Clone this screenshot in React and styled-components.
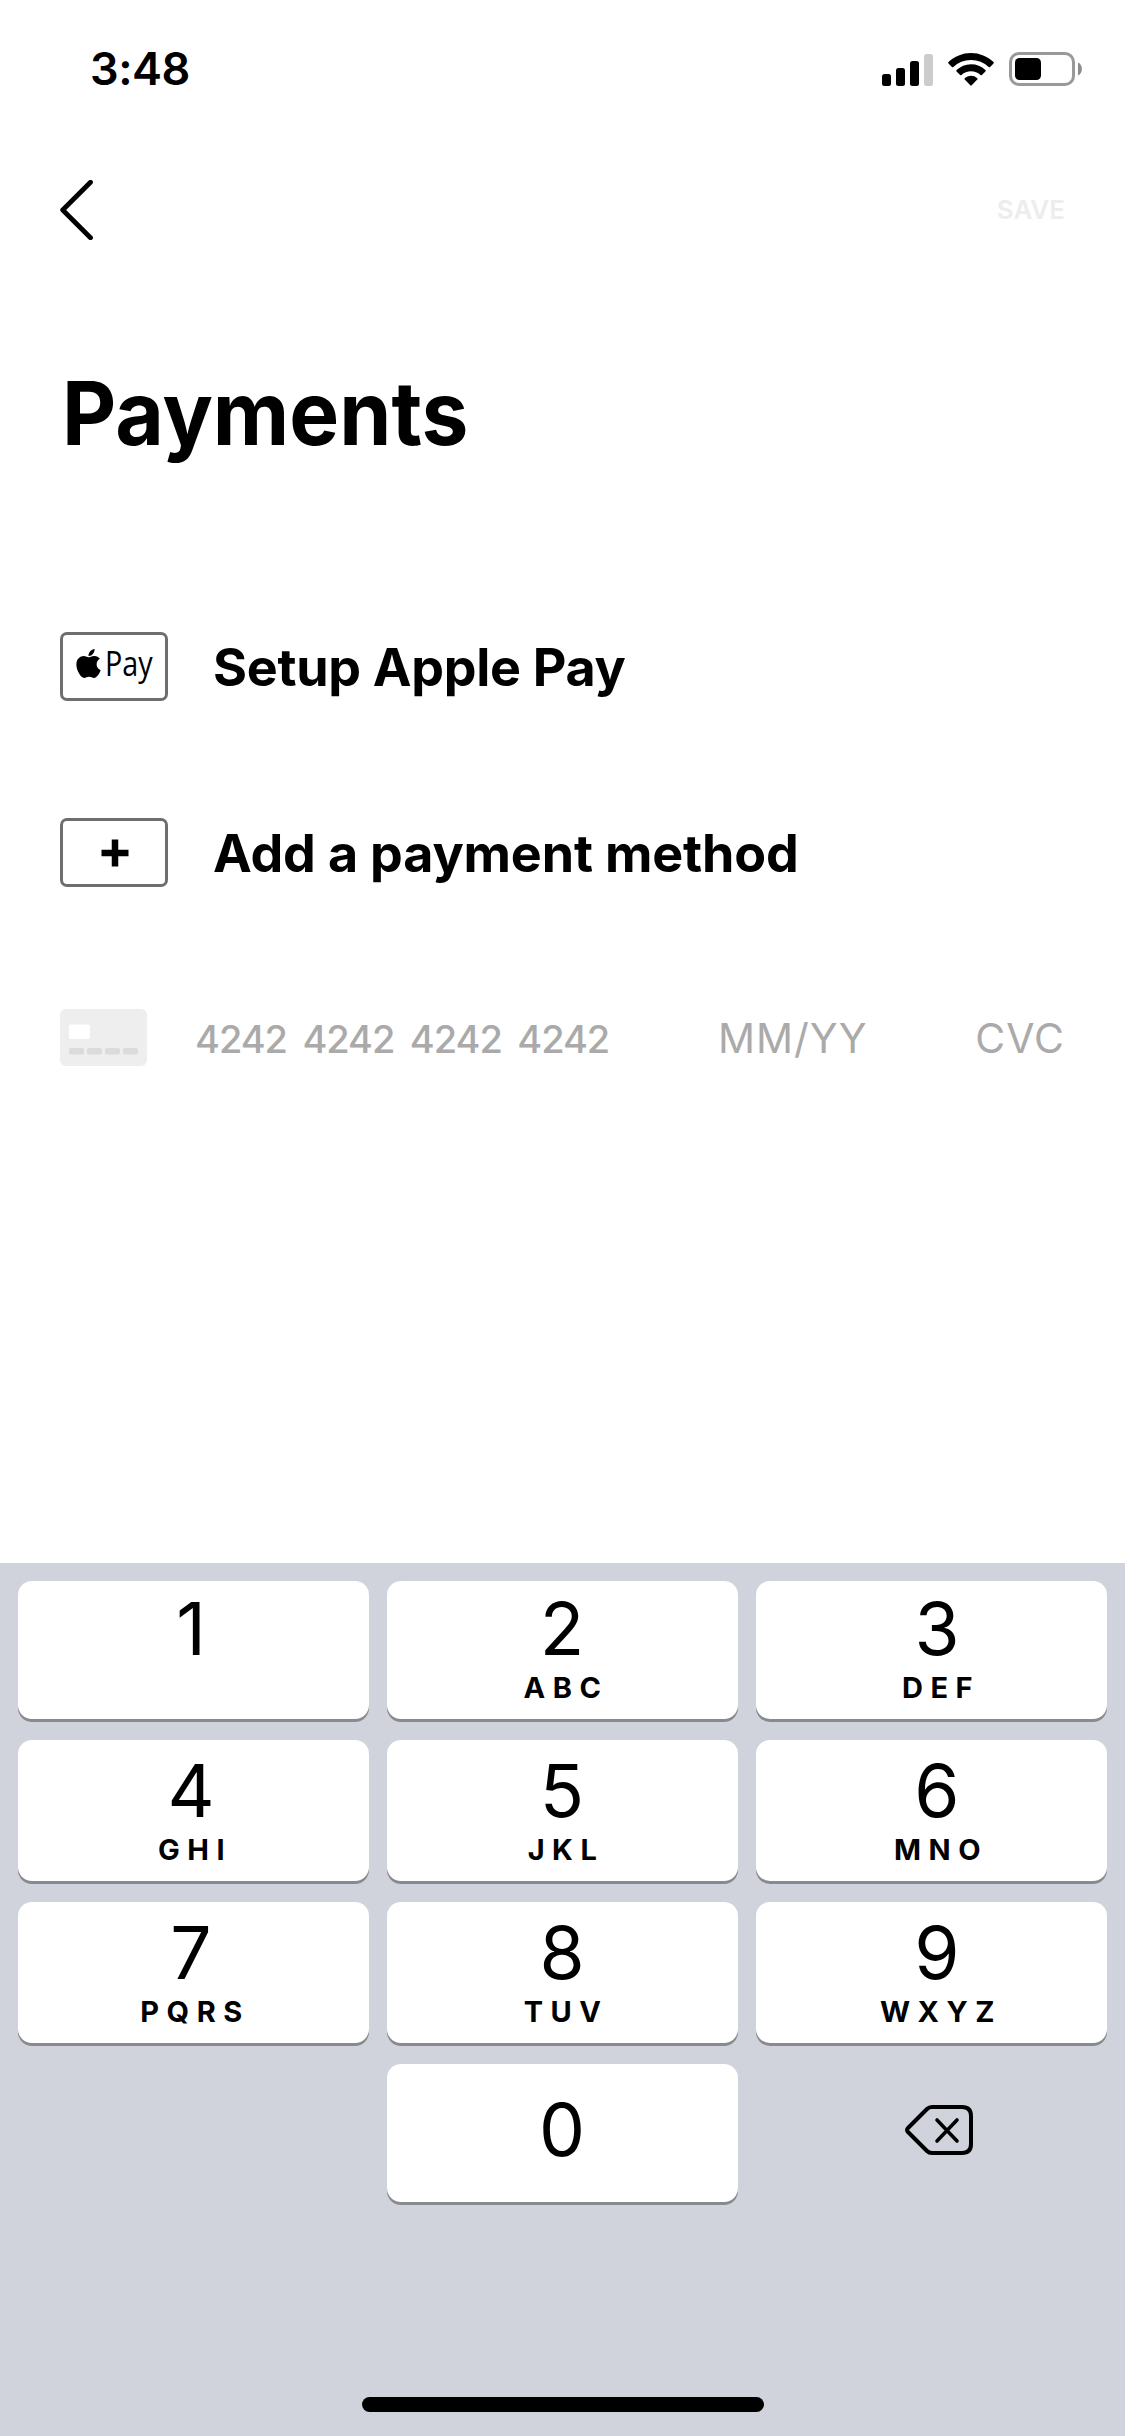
import React from "react";
import styled, { createGlobalStyle } from "styled-components";
import { FaApple } from "react-icons/fa";

const GlobalStyle = createGlobalStyle`
  * { box-sizing: border-box; }
  body { margin: 0; background: #fff; }
`;

const Screen = styled.main`
  display: flex;
  flex-direction: column;
  width: 1125px;
  height: 2436px;
  overflow: hidden;
  background: #fff;
  color: #000;
  font-family: Inter, "Liberation Sans", sans-serif;
`;

const StatusBar = styled.header`
  display: flex;
  align-items: center;
  justify-content: space-between;
  height: 138px;
  padding: 0 43px 0 90px;
`;

const Clock = styled.time`
  font-size: 45px;
  line-height: 50px;
  font-weight: 600;
  letter-spacing: -0.5px;
`;

const StatusIcons = styled.div`
  display: flex;
  align-items: center;
  gap: 15px;
`;

const NavBar = styled.nav`
  display: flex;
  align-items: center;
  justify-content: space-between;
  height: 144px;
  padding: 0 60px 0 60px;
`;

const NavButton = styled.button`
  display: flex;
  padding: 0;
  border: 0;
  background: none;
  color: ${({ $muted }) => ($muted ? "#ededed" : "#000")};
  font: 600 26px/30px Inter, "Liberation Sans", sans-serif;
  letter-spacing: 0;
`;

const Title = styled.h1`
  margin: 81px 0 0 62px;
  font-size: 88px;
  line-height: 100px;
  font-weight: 700;
  letter-spacing: 0;
  transform: scaleX(0.952);
  transform-origin: left center;
`;

const Methods = styled.ul`
  display: flex;
  flex-direction: column;
  gap: 117px;
  margin: 169px 0 0;
  padding: 0 60px;
  list-style: none;
`;

const Method = styled.li`
  display: flex;
  align-items: center;
  gap: 45px;
  height: 69px;
`;

const Badge = styled.span`
  display: flex;
  align-items: center;
  justify-content: center;
  width: 108px;
  height: 69px;
  border: 3px solid #6e6e6e;
  border-radius: 7px;
`;

const MethodName = styled.span`
  padding-top: 2px;
  font-size: 52px;
  line-height: 64px;
  font-weight: 700;
  letter-spacing: ${({ $tracking }) => $tracking};
  white-space: nowrap;
`;

const PayMark = styled.span`
  display: flex;
  align-items: center;
  gap: 0;
  height: 40px;
  margin: 0 -3px 7px 0;
`;

const PayWord = styled.span`
  width: 54px;
  font: 400 35px/40px "Open Sans", "Noto Sans", sans-serif;
  transform: scaleX(0.82);
  transform-origin: left center;
`;

const CardForm = styled.form`
  display: flex;
  align-items: center;
  height: 57px;
  margin-top: 122px;
  padding: 0 60px;
  color: #aaa;
  line-height: 50px;
`;

const CardNumber = styled.span`
  display: flex;
  gap: 15.5px;
  width: 523px;
  margin-left: 48px;
  padding-top: 2px;
  font-size: 38px;
  font-weight: 450;
  letter-spacing: -1.05px;
`;

const CardField = styled.span`
  font-size: 41px;
  letter-spacing: ${({ $tracking }) => $tracking};
  &:last-child { margin-left: auto; }
`;

const Keyboard = styled.section`
  display: flex;
  flex-direction: column;
  align-items: center;
  justify-content: space-between;
  height: 873px;
  margin-top: auto;
  padding: 18px 18px 24px;
  background: #d0d3db;
`;

const Keys = styled.div`
  display: grid;
  grid-template-columns: repeat(3, 351px);
  grid-template-rows: 138px 141px 141px 138px;
  gap: 21px 18px;
`;

const Key = styled.button`
  display: flex;
  flex-direction: column;
  align-items: center;
  justify-content: ${({ $single }) => ($single ? "center" : "flex-end")};
  padding: 0 0 ${({ $single }) => ($single ? "6px" : "16px")};
  border: 0;
  border-radius: 14px;
  background: ${({ $plain }) => ($plain ? "transparent" : "#fff")};
  box-shadow: ${({ $plain }) => ($plain ? "none" : "0 3px 0 #888a8d")};
  color: #000;
  font-family: Inter, "Liberation Sans", sans-serif;
`;

const KeyFace = styled.span`
  display: flex;
  flex-direction: column;
  align-items: center;
  margin-left: ${({ $shift }) => $shift}px;
`;

const Digit = styled.span`
  font-size: 73px;
  line-height: 80px;
  font-weight: 400;
`;

const Letters = styled.span`
  height: 31px;
  margin-top: 3px;
  padding-left: 8px;
  font-size: 29px;
  line-height: 31px;
  font-weight: 650;
  letter-spacing: 7.5px;
`;

const HomeIndicator = styled.div`
  width: 402px;
  height: 15px;
  border-radius: 8px;
  background: #000;
`;

const columnShift = [-5, -1, 11];

const keys = [
  ["1", ""], ["2", "ABC"], ["3", "DEF"],
  ["4", "GHI"], ["5", "JKL"], ["6", "MNO"],
  ["7", "PQRS"], ["8", "TUV"], ["9", "WXYZ"],
];

const SignalIcon = () => (
  <svg width="51" height="33" viewBox="0 0 51 33">
    <rect x="0" y="21" width="9" height="12" rx="2.5" />
    <rect x="14" y="15" width="9" height="18" rx="2.5" />
    <rect x="28" y="8" width="9" height="25" rx="2.5" />
    <rect x="42" y="1" width="9" height="32" rx="2.5" fill="#ccc" />
  </svg>
);

const WifiIcon = () => (
  <svg width="46" height="33" viewBox="0 0 46 33">
    <path d="M23 0C14.400 0 6.400 3.400.500 9.100a1 1 0 0 0 0 1.400l3.400 3.500a1 1 0 0 0 1.400 0A25.500 25.500 0 0 1 23 7a25.500 25.500 0 0 1 17.700 7 1 1 0 0 0 1.400 0l3.400-3.500a1 1 0 0 0 0-1.400C39.600 3.400 31.600 0 23 0Z" />
    <path d="M23 11.300c-5.600 0-10.600 2.200-14.400 5.800a1 1 0 0 0 0 1.400l3.500 3.500a1 1 0 0 0 1.400 0 14 14 0 0 1 19 0 1 1 0 0 0 1.400 0l3.500-3.500a1 1 0 0 0 0-1.400A20.800 20.800 0 0 0 23 11.300Z" />
    <path d="M23 22.800c-2.400 0-4.600.9-6.300 2.400a1 1 0 0 0 0 1.400l5.600 5.700a1 1 0 0 0 1.400 0l5.600-5.700a1 1 0 0 0 0-1.400 9.300 9.300 0 0 0-6.300-2.400Z" />
  </svg>
);

const BatteryIcon = () => (
  <svg width="73" height="34" viewBox="0 0 73 34">
    <rect x="1.500" y="1.500" width="63" height="31" rx="8.500" fill="none" stroke="#999" strokeWidth="3" />
    <rect x="6" y="6" width="26" height="22" rx="4.500" />
    <path d="M69 10.500c5.200 2.200 5.200 10.800 0 13Z" fill="#8c8c8c" />
  </svg>
);

const BackIcon = () => (
  <svg width="35" height="60" viewBox="0 0 35 60">
    <path d="M30.500 2.300 2.700 30l27.800 27.700" fill="none" stroke="#000" strokeWidth="4.800" strokeLinecap="round" strokeLinejoin="round" />
  </svg>
);

const PlusMark = styled.svg`
  margin-left: 1px;
`;

const PlusIcon = () => (
  <PlusMark width="28" height="28" viewBox="0 0 28 28">
    <path d="M14 0.500v27M0.500 14h27" fill="none" stroke="#000" strokeWidth="6.500" />
  </PlusMark>
);

const CardIcon = () => (
  <svg width="87" height="57" viewBox="0 0 87 57">
    <rect width="87" height="57" rx="6" fill="#eee" />
    <rect x="9" y="15.500" width="21" height="14.500" rx="2" fill="#fff" />
    {[9, 27, 45, 63].map((x) => (
      <rect key={x} x={x} y="39" width="15" height="6.500" rx="2" fill="#dbdbdb" />
    ))}
  </svg>
);

const DeleteIcon = () => (
  <svg width="70" height="52" viewBox="0 0 70 52" fill="none" stroke="#000" strokeLinecap="round" strokeLinejoin="round">
    <path d="M28 3h30q9 0 9 9v28q0 9-9 9H28q-3 0-5-2L4 28q-2-2 0-4L23 5q2-2 5-2Z" strokeWidth="4" />
    <path d="m33 16 20 21M53 16 33 37" strokeWidth="3.600" />
  </svg>
);

export default function App() {
  return (
    <Screen>
      <GlobalStyle />
      <StatusBar>
        <Clock>3:48</Clock>
        <StatusIcons>
          <SignalIcon />
          <WifiIcon />
          <BatteryIcon />
        </StatusIcons>
      </StatusBar>
      <NavBar>
        <NavButton aria-label="Back"><BackIcon /></NavButton>
        <NavButton $muted>SAVE</NavButton>
      </NavBar>
      <Title>Payments</Title>
      <Methods>
        <Method>
          <Badge>
            <PayMark>
              <FaApple size={33} />
              <PayWord>Pay</PayWord>
            </PayMark>
          </Badge>
          <MethodName $tracking="-0.3px">Setup Apple Pay</MethodName>
        </Method>
        <Method>
          <Badge><PlusIcon /></Badge>
          <MethodName $tracking="-0.15px">Add a payment method</MethodName>
        </Method>
      </Methods>
      <CardForm>
        <CardIcon />
        <CardNumber>
          <span>4242</span><span>4242</span><span>4242</span><span>4242</span>
        </CardNumber>
        <CardField $tracking="1px">MM/YY</CardField>
        <CardField $tracking="1px">CVC</CardField>
      </CardForm>
      <Keyboard>
        <Keys>
          {keys.map(([digit, letters], i) => (
            <Key key={digit}>
              <KeyFace $shift={columnShift[i % 3]}>
                <Digit>{digit}</Digit>
                <Letters>{letters}</Letters>
              </KeyFace>
            </Key>
          ))}
          <span />
          <Key $single>
            <KeyFace $shift={columnShift[1]}><Digit>0</Digit></KeyFace>
          </Key>
          <Key $plain $single aria-label="Delete">
            <KeyFace $shift={15}><DeleteIcon /></KeyFace>
          </Key>
        </Keys>
        <HomeIndicator />
      </Keyboard>
    </Screen>
  );
}
